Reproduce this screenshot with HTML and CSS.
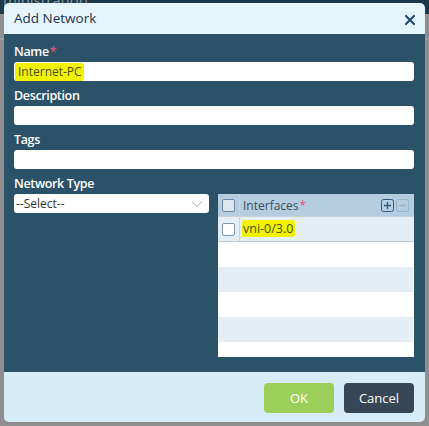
FILE: index.html
```html
<!DOCTYPE html>
<html>
<head>
<meta charset="utf-8">
<link rel="stylesheet" href="styles.css">
</head>
<body>
<div class="page">
  <div class="topbar"><span class="crumb">ministration</span></div>
  <div class="pagebody"></div>
</div>
<div class="modal">
  <div class="mhead">
    <span class="mtitle">Add Network</span>
    <svg class="close" width="12" height="12" viewBox="0 0 12 12"><path d="M2 2 L10 10 M10 2 L2 10" stroke="#1f4e74" stroke-width="2.2" stroke-linecap="round"/></svg>
  </div>
  <div class="mbody">
    <div class="field">
      <label class="lbl">Name<span class="req">*</span></label>
      <div class="input"><span class="hl">Internet-PC</span></div>
    </div>
    <div class="field">
      <label class="lbl">Description</label>
      <div class="input"></div>
    </div>
    <div class="field">
      <label class="lbl">Tags</label>
      <div class="input"></div>
    </div>
    <div class="row">
      <div class="field col-left">
        <label class="lbl">Network Type</label>
        <div class="select">--Select--
          <svg class="chev" width="12" height="8" viewBox="0 0 12 8"><path d="M1 1.5 L6 6.5 L11 1.5" fill="none" stroke="#9aa4ad" stroke-width="1"/></svg>
        </div>
      </div>
      <div class="grid">
        <div class="ghead">
          <div class="cbcell"><span class="cb"></span></div>
          <div class="gtitle">Interfaces<span class="req">*</span></div>
          <div class="gbtns">
            <span class="gbtn plus">
              <svg width="13" height="13" viewBox="0 0 13 13"><rect x="0.5" y="0.5" width="12" height="12" rx="2" fill="none" stroke="#2d5c80" stroke-width="1"/><path d="M6.5 3 V10 M3 6.5 H10" stroke="#2d5c80" stroke-width="1.3"/></svg>
            </span>
            <span class="gbtn minus">
              <svg width="13" height="13" viewBox="0 0 13 13"><rect x="0.5" y="0.5" width="12" height="12" rx="2" fill="none" stroke="#97b4c9" stroke-width="1"/><path d="M3 6.5 H10" stroke="#97b4c9" stroke-width="1.3"/></svg>
            </span>
          </div>
        </div>
        <div class="grow sel">
          <div class="cbcell"><span class="cb"></span></div>
          <div class="gtext"><span class="hl hl2">vni-0/3.0</span></div>
        </div>
        <div class="grow"></div>
        <div class="grow alt"></div>
        <div class="grow"></div>
        <div class="grow alt"></div>
        <div class="grow last"></div>
      </div>
    </div>
  </div>
  <div class="mfoot">
    <button class="btn ok">OK</button>
    <button class="btn cancel">Cancel</button>
  </div>
</div>
</body>
</html>
```
FILE: styles.css
```css
html, body {
  margin: 0;
  padding: 0;
}
body {
  width: 429px;
  height: 426px;
  overflow: hidden;
  background: #939393;
  font-family: "Open Sans", "Noto Sans", sans-serif;
  position: relative;
}
.page {
  height: 426px;
}
.topbar {
  height: 14px;
  background: #1d3a4c;
  overflow: hidden;
}
.crumb {
  display: block;
  color: #8a9aa5;
  font-size: 15px;
  line-height: 14px;
  margin-left: 3px;
  margin-top: -7px;
}
.pagebody {
  height: 412px;
  background: linear-gradient(#8f8f8f 0, #8f8f8f 24px, #a0a0a0 24px, #a0a0a0 26px, #8f8f8f 26px);
}
.modal {
  position: absolute;
  left: 4px;
  top: 3px;
  width: 421px;
  height: 419px;
  border-radius: 5px;
  overflow: hidden;
  display: flex;
  flex-direction: column;
}
.mhead {
  height: 31px;
  background: #e6f4fc;
  display: flex;
  align-items: center;
  justify-content: space-between;
  padding: 0 9px 0 10px;
  flex: none;
}
.mtitle {
  font-size: 13.5px;
  color: #1c3550;
  margin-top: -2px;
}
.close {
  margin-top: 3px;
}
.mbody {
  flex: 1;
  background: #2b5269;
  padding: 10px 11px 0 10px;
  display: flex;
  flex-direction: column;
}
.field {
  display: flex;
  flex-direction: column;
  margin-bottom: 7px;
}
.lbl {
  color: #ffffff;
  font-size: 12.5px;
  line-height: 16px;
  height: 16px;
  font-weight: 600;
  letter-spacing: -0.35px;
  margin-bottom: 2px;
}
.req {
  color: #e2507a;
  margin-left: 1px;
}
.input {
  height: 19px;
  background: #fff;
  border-radius: 3px;
  font-size: 12px;
  line-height: 19px;
  color: #4a4a10;
  padding-left: 1px;
  display: flex;
  align-items: center;
}
.hl {
  background: #f0f200;
  border-radius: 3px;
  padding: 0 2px 0 3px;
  line-height: 18px;
  color: #4d4d14;
}
.hl2 {
  line-height: 22px;
  font-size: 12.5px;
  padding: 0 2px 0 1px;
}
.row {
  display: flex;
  gap: 9px;
}
.col-left {
  width: 195px;
  flex: none;
}
.select {
  height: 19px;
  background: #fff;
  border-radius: 3px;
  font-size: 12px;
  line-height: 19px;
  color: #333;
  padding-left: 2px;
  position: relative;
}
.chev {
  position: absolute;
  right: 6px;
  top: 6px;
}
.grid {
  width: 196px;
  height: 163px;
  margin-top: 18px;
  background: #fff;
  display: flex;
  flex-direction: column;
}
.ghead {
  height: 22px;
  background: #b4cde0;
  display: flex;
  align-items: center;
  flex: none;
  border-bottom: 1px solid #c7d2db;
}
.cbcell {
  width: 22px;
  height: 100%;
  display: flex;
  align-items: center;
  justify-content: center;
  border-right: 1px solid #c9d3db;
  flex: none;
  box-sizing: border-box;
}
.cb {
  width: 11px;
  height: 11px;
  border: 1px solid #6a8aa3;
  border-radius: 2px;
  background: #dbe6ef;
}
.grow .cb {
  background: #fff;
  border-color: #7e98ad;
}
.gtitle {
  flex: 1;
  font-size: 12px;
  color: #3d4f5e;
  padding-left: 3px;
}
.gbtns {
  display: flex;
  gap: 2px;
  padding-right: 5px;
}
.gbtn {
  width: 13px;
  height: 13px;
  display: block;
}
.gbtn svg {
  display: block;
}
.grow {
  height: 25px;
  display: flex;
  align-items: center;
  flex: none;
}
.grow.sel {
  background: #e6eef5;
  border-bottom: 1px solid #c2c9cf;
  height: 24px;
}
.grow.alt {
  background: #e6eef5;
  margin-right: 1px;
}
.grow.last {
  height: 15px;
}
.gtext {
  font-size: 12px;
  padding-left: 2px;
}
.mfoot {
  height: 50px;
  background: #d6ecf7;
  display: flex;
  justify-content: flex-end;
  align-items: center;
  gap: 10px;
  padding-right: 11px;
  flex: none;
}
.btn {
  height: 30px;
  width: 70px;
  border: none;
  border-radius: 4px;
  color: #fff;
  font-family: "Open Sans", "Noto Sans", sans-serif;
  font-size: 13px;
  padding: 0;
  margin-top: 1px;
}
.ok {
  background: #9ccf5a;
}
.cancel {
  background: #374656;
}
```
